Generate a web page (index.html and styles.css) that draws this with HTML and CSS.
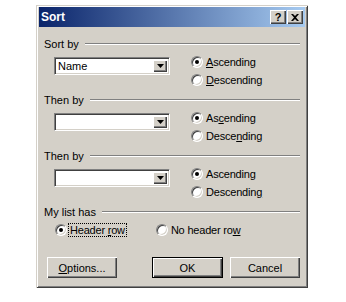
FILE: index.html
```html
<!DOCTYPE html>
<html>
<head>
<meta charset="utf-8">
<link rel="stylesheet" href="styles.css">
</head>
<body>
<div class="window">
  <div class="titlebar">
    <span class="title">Sort</span>
    <div class="tb-buttons">
      <span class="tbtn help">?</span>
      <span class="tbtn"><svg width="8" height="7" viewBox="0 0 8 7"><path d="M0 0h2l2 2 2-2h2L5 3.5 8 7H6L4 5 2 7H0l3-3.5z" fill="#000"/></svg></span>
    </div>
  </div>
  <div class="body">
    <section class="group">
      <div class="legend"><span>Sort by</span><span class="rule"></span></div>
      <div class="group-row">
        <div class="combo"><span class="combo-text">Name</span><span class="combo-btn"><svg width="7" height="4" viewBox="0 0 7 4"><path d="M0 0h7L3.5 4z" fill="#000"/></svg></span></div>
        <div class="radios">
          <div class="radio"><span class="circle checked"></span><span><u>A</u>scending</span></div>
          <div class="radio"><span class="circle"></span><span><u>D</u>escending</span></div>
        </div>
      </div>
    </section>
    <section class="group">
      <div class="legend"><span>Then by</span><span class="rule"></span></div>
      <div class="group-row">
        <div class="combo"><span class="combo-text"></span><span class="combo-btn"><svg width="7" height="4" viewBox="0 0 7 4"><path d="M0 0h7L3.5 4z" fill="#000"/></svg></span></div>
        <div class="radios">
          <div class="radio"><span class="circle checked"></span><span>As<u>c</u>ending</span></div>
          <div class="radio"><span class="circle"></span><span>Desce<u>n</u>ding</span></div>
        </div>
      </div>
    </section>
    <section class="group">
      <div class="legend"><span>Then by</span><span class="rule"></span></div>
      <div class="group-row">
        <div class="combo"><span class="combo-text"></span><span class="combo-btn"><svg width="7" height="4" viewBox="0 0 7 4"><path d="M0 0h7L3.5 4z" fill="#000"/></svg></span></div>
        <div class="radios">
          <div class="radio"><span class="circle checked"></span><span>Ascending</span></div>
          <div class="radio"><span class="circle"></span><span>Descendin<u>g</u></span></div>
        </div>
      </div>
    </section>
    <section class="list-group">
      <div class="legend"><span>My list has</span><span class="rule"></span></div>
      <div class="list-row">
        <div class="radio"><span class="circle checked"></span><span class="focus">Header <u>r</u>ow</span></div>
        <div class="radio no-header"><span class="circle"></span><span>No header ro<u>w</u></span></div>
      </div>
    </section>
    <div class="buttons">
      <span class="btn options"><span><u>O</u>ptions...</span></span>
      <span class="btn default">OK</span>
      <span class="btn cancel">Cancel</span>
    </div>
  </div>
</div>
</body>
</html>
```
FILE: styles.css
```css
html, body {
  margin: 0;
  padding: 0;
  background: #fff;
}
body {
  font-family: "Liberation Sans", Arial, sans-serif;
  font-size: 11px;
  color: #000;
}
.window {
  margin: 5px 0 0 36px;
  width: 272px;
  height: 283px;
  box-sizing: border-box;
  padding: 2px 3px 3px 3px;
  background: #d4d0c8;
  box-shadow: inset 1px 1px 0 #d4d0c8, inset -1px -1px 0 #404040, inset 2px 2px 0 #fff, inset -2px -2px 0 #808080;
}
.titlebar {
  height: 20px;
  display: flex;
  align-items: center;
  background: linear-gradient(to right, #0a246a, #a6caf0);
  padding: 0 2px 0 2px;
}
.title {
  color: #fff;
  font-weight: bold;
  font-size: 12px;
  flex: 1;
}
.tb-buttons {
  display: flex;
  gap: 1px;
}
.tbtn {
  width: 16px;
  height: 14px;
  box-sizing: border-box;
  background: #d4d0c8;
  display: flex;
  align-items: center;
  justify-content: center;
  box-shadow: inset 1px 1px 0 #fff, inset -1px -1px 0 #404040, inset -2px -2px 0 #808080;
  font-weight: bold;
  font-size: 11px;
  line-height: 1;
}
.body {
  padding: 10px 5px 0 5px;
}
.legend {
  height: 13px;
  display: flex;
  align-items: center;
}
.rule {
  flex: 1;
  margin-left: 6px;
  height: 0;
  border-top: 1px solid #808080;
  border-bottom: 1px solid #fff;
}
.group {
  height: 56px;
}
.group-row {
  display: flex;
}
.combo {
  margin: 7px 0 0 10px;
  width: 116px;
  height: 18px;
  box-sizing: border-box;
  background: #fff;
  border: 1px solid;
  border-color: #808080 #fff #fff #808080;
  box-shadow: inset 1px 1px 0 #404040, inset -1px -1px 0 #d4d0c8;
  padding: 2px;
  display: flex;
  align-items: center;
}
.combo-text {
  flex: 1;
  padding-left: 1px;
}
.combo-btn {
  width: 14px;
  height: 12px;
  box-sizing: border-box;
  background: #d4d0c8;
  box-shadow: inset 1px 1px 0 #fff, inset -1px -1px 0 #404040, inset -2px -2px 0 #808080;
  display: flex;
  align-items: center;
  justify-content: center;
}
.radios {
  margin-left: 21px;
  padding-top: 3px;
}
.radio {
  height: 18px;
  display: flex;
  align-items: center;
  gap: 3px;
  letter-spacing: -0.2px;
}
.circle {
  width: 12px;
  height: 12px;
  box-sizing: border-box;
  border-radius: 50%;
  background: #fff;
  border: 1px solid;
  border-color: #808080 #fff #fff #808080;
  box-shadow: inset 1px 1px 0 #404040, inset -1px -1px 0 #d4d0c8;
  position: relative;
  flex: none;
}
.circle.checked::after {
  content: "";
  position: absolute;
  left: 3px;
  top: 3px;
  width: 4px;
  height: 4px;
  border-radius: 50%;
  background: #000;
}
.list-row {
  display: flex;
  margin: 3px 0 0 11px;
}
.focus {
  outline: 1px dotted #000;
  padding: 0 1px;
  margin-left: -1px;
}
.no-header {
  margin-left: 30px;
}
.buttons {
  display: flex;
  margin: 18px 0 0 3px;
}
.btn {
  width: 70px;
  height: 21px;
  box-sizing: border-box;
  display: flex;
  align-items: center;
  justify-content: center;
  background: #d4d0c8;
  box-shadow: inset 1px 1px 0 #fff, inset -1px -1px 0 #404040, inset -2px -2px 0 #808080;
}
.btn.default {
  margin-left: 35px;
  width: 71px;
  border: 1px solid #000;
}
.btn.cancel {
  margin-left: 7px;
}
```
